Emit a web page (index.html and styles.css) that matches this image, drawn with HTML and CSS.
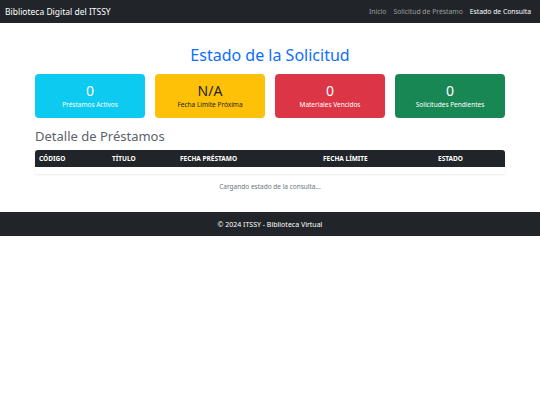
FILE: index.html
```html
<!DOCTYPE html>
<html lang="es">
<head>
<meta charset="utf-8">
<title>Estado de Consulta</title>
<link rel="stylesheet" href="styles.css">
</head>
<body>
<nav class="navbar">
  <span class="brand">Biblioteca Digital del ITSSY</span>
  <ul class="nav">
    <li><a class="nav-link">Inicio</a></li>
    <li><a class="nav-link">Solicitud de Préstamo</a></li>
    <li><a class="nav-link active">Estado de Consulta</a></li>
  </ul>
</nav>
<main class="container">
  <h2 class="title">Estado de la Solicitud</h2>
  <div class="cards">
    <div class="card info"><div class="num">0</div><div class="label">Préstamos Activos</div></div>
    <div class="card warning"><div class="num">N/A</div><div class="label">Fecha Límite Próxima</div></div>
    <div class="card danger"><div class="num">0</div><div class="label">Materiales Vencidos</div></div>
    <div class="card success"><div class="num">0</div><div class="label">Solicitudes Pendientes</div></div>
  </div>
  <h3 class="subtitle">Detalle de Préstamos</h3>
  <div class="table-wrap">
    <table class="table">
      <thead>
        <tr>
          <th class="c1">CÓDIGO</th>
          <th class="c2">TÍTULO</th>
          <th class="c3">FECHA PRÉSTAMO</th>
          <th class="c4">FECHA LÍMITE</th>
          <th class="c5">ESTADO</th>
        </tr>
      </thead>
      <tbody>
        <tr class="empty"><td colspan="5"></td></tr>
      </tbody>
    </table>
  </div>
  <p class="loading">Cargando estado de la consulta...</p>
</main>
<footer class="footer">© 2024 ITSSY - Biblioteca Virtual</footer>
</body>
</html>
```

FILE: styles.css
```css
* { box-sizing: border-box; }
body {
  margin: 0;
  font-family: "Noto Sans", "Open Sans", sans-serif;
  color: #212529;
  background: #fff;
}
.navbar {
  height: 23px;
  background: #212529;
  display: flex;
  align-items: center;
  justify-content: space-between;
  padding: 0 9px 0 5px;
}
.brand {
  color: #fff;
  font-size: 8.5px;
  line-height: 12px;
}
.nav {
  list-style: none;
  margin: 0;
  padding: 0;
  display: flex;
  align-items: center;
  gap: 7px;
  font-size: 6.8px;
  line-height: 10px;
}
.nav-link {
  color: rgba(255,255,255,0.55);
}
.nav-link.active { color: #fff; }
.container {
  width: 470px;
  margin: 0 auto;
  padding-top: 22px;
}
.title {
  margin: 0;
  text-align: center;
  color: #0d6efd;
  font-size: 16px;
  font-weight: 400;
  line-height: 20px;
}
.cards {
  display: grid;
  grid-template-columns: repeat(4, 1fr);
  gap: 10px;
  margin-top: 9px;
}
.card {
  height: 44px;
  border-radius: 4px;
  display: flex;
  flex-direction: column;
  align-items: center;
  justify-content: center;
  color: #fff;
}
.card .num {
  font-size: 14px;
  line-height: 18px;
}
.card .label {
  font-size: 6.5px;
  line-height: 10px;
}
.info { background: #0dcaf0; }
.warning { background: #ffc107; color: #212529; }
.danger { background: #dc3545; }
.success { background: #198754; }
.subtitle {
  margin: 9px 0 0;
  font-size: 13px;
  font-weight: 400;
  line-height: 18px;
  color: #5c636a;
}
.table-wrap {
  margin-top: 5px;
  border-radius: 3px;
  overflow: hidden;
  box-shadow: 0 1px 2px rgba(0,0,0,0.08);
}
.table {
  width: 100%;
  border-collapse: collapse;
  table-layout: fixed;
}
.table th {
  background: #212529;
  color: #fff;
  font-size: 6.5px;
  font-weight: 700;
  text-align: left;
  height: 17px;
  padding: 0 4px;
}
.c1 { width: 73px; }
.c2 { width: 68px; }
.c3 { width: 143px; }
.c4 { width: 115px; }
.empty td { height: 7px; padding: 0; }
.loading {
  margin: 8px 0 0;
  text-align: center;
  font-size: 6.5px;
  color: #6c757d;
  line-height: 10px;
}
.footer {
  margin-top: 20px;
  height: 24px;
  background: #212529;
  color: #fff;
  font-size: 7px;
  display: flex;
  align-items: center;
  justify-content: center;
}
```
